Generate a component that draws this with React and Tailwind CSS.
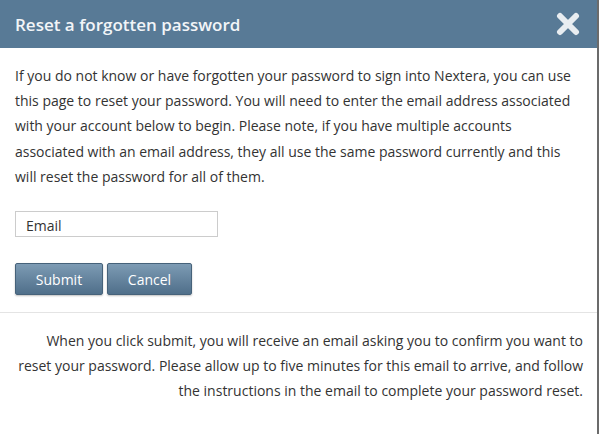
export default function App() {
  return (
    <div className="w-[599px] h-[434px] bg-white border-r-2 border-[#6b6b6b] overflow-hidden" style={{ fontFamily: '"Open Sans", sans-serif' }}>
      <div className="h-[48px] bg-[#587a96] flex items-center justify-between pl-[15px] pr-[17px]">
        <h1 className="text-[17px] font-semibold text-[#f2f5f8] leading-none">Reset a forgotten password</h1>
        <svg width="24" height="24" viewBox="0 0 24 24" className="mt-[-1px]">
          <path d="M4 4 L20 20 M20 4 L4 20" stroke="#e8edf1" strokeWidth="6" strokeLinecap="round" />
        </svg>
      </div>
      <div className="pl-[15px] pr-[20px] pt-[15px] pb-[17px] border-b border-[#e4e4e4]">
        <p className="text-[14px] leading-[25.2px] text-[#333]">
          If you do not know or have forgotten your password to sign into Nextera, you can use this page to reset your password. You will need to enter the email address associated with your account below to begin. Please note, if you have multiple accounts associated with an email address, they all use the same password currently and this will reset the password for all of them.
        </p>
        <input
          placeholder="Email"
          className="mt-[22px] block w-[203px] h-[26px] border border-[#cccccc] px-[10px] pt-[3px] text-[14px] text-[#333] placeholder:text-[#333] outline-none"
        />
        <div className="mt-[26px] flex gap-[4px]">
          <button className="w-[88px] h-[32px] rounded-[2px] border border-[#46627a] bg-gradient-to-b from-[#7d9bb4] to-[#4f6f8a] text-white text-[14px] shadow-[0_1px_2px_rgba(0,0,0,0.25)]">Submit</button>
          <button className="w-[85px] h-[32px] rounded-[2px] border border-[#46627a] bg-gradient-to-b from-[#7d9bb4] to-[#4f6f8a] text-white text-[14px] shadow-[0_1px_2px_rgba(0,0,0,0.25)]">Cancel</button>
        </div>
      </div>
      <div className="pl-[15px] pr-[14px] pt-[15px]">
        <p className="text-[14px] leading-[25.2px] text-[#333] text-right">
          When you click submit, you will receive an email asking you to confirm you want to reset your password. Please allow up to five minutes for this email to arrive, and follow the instructions in the email to complete your password reset.
        </p>
      </div>
    </div>
  );
}
